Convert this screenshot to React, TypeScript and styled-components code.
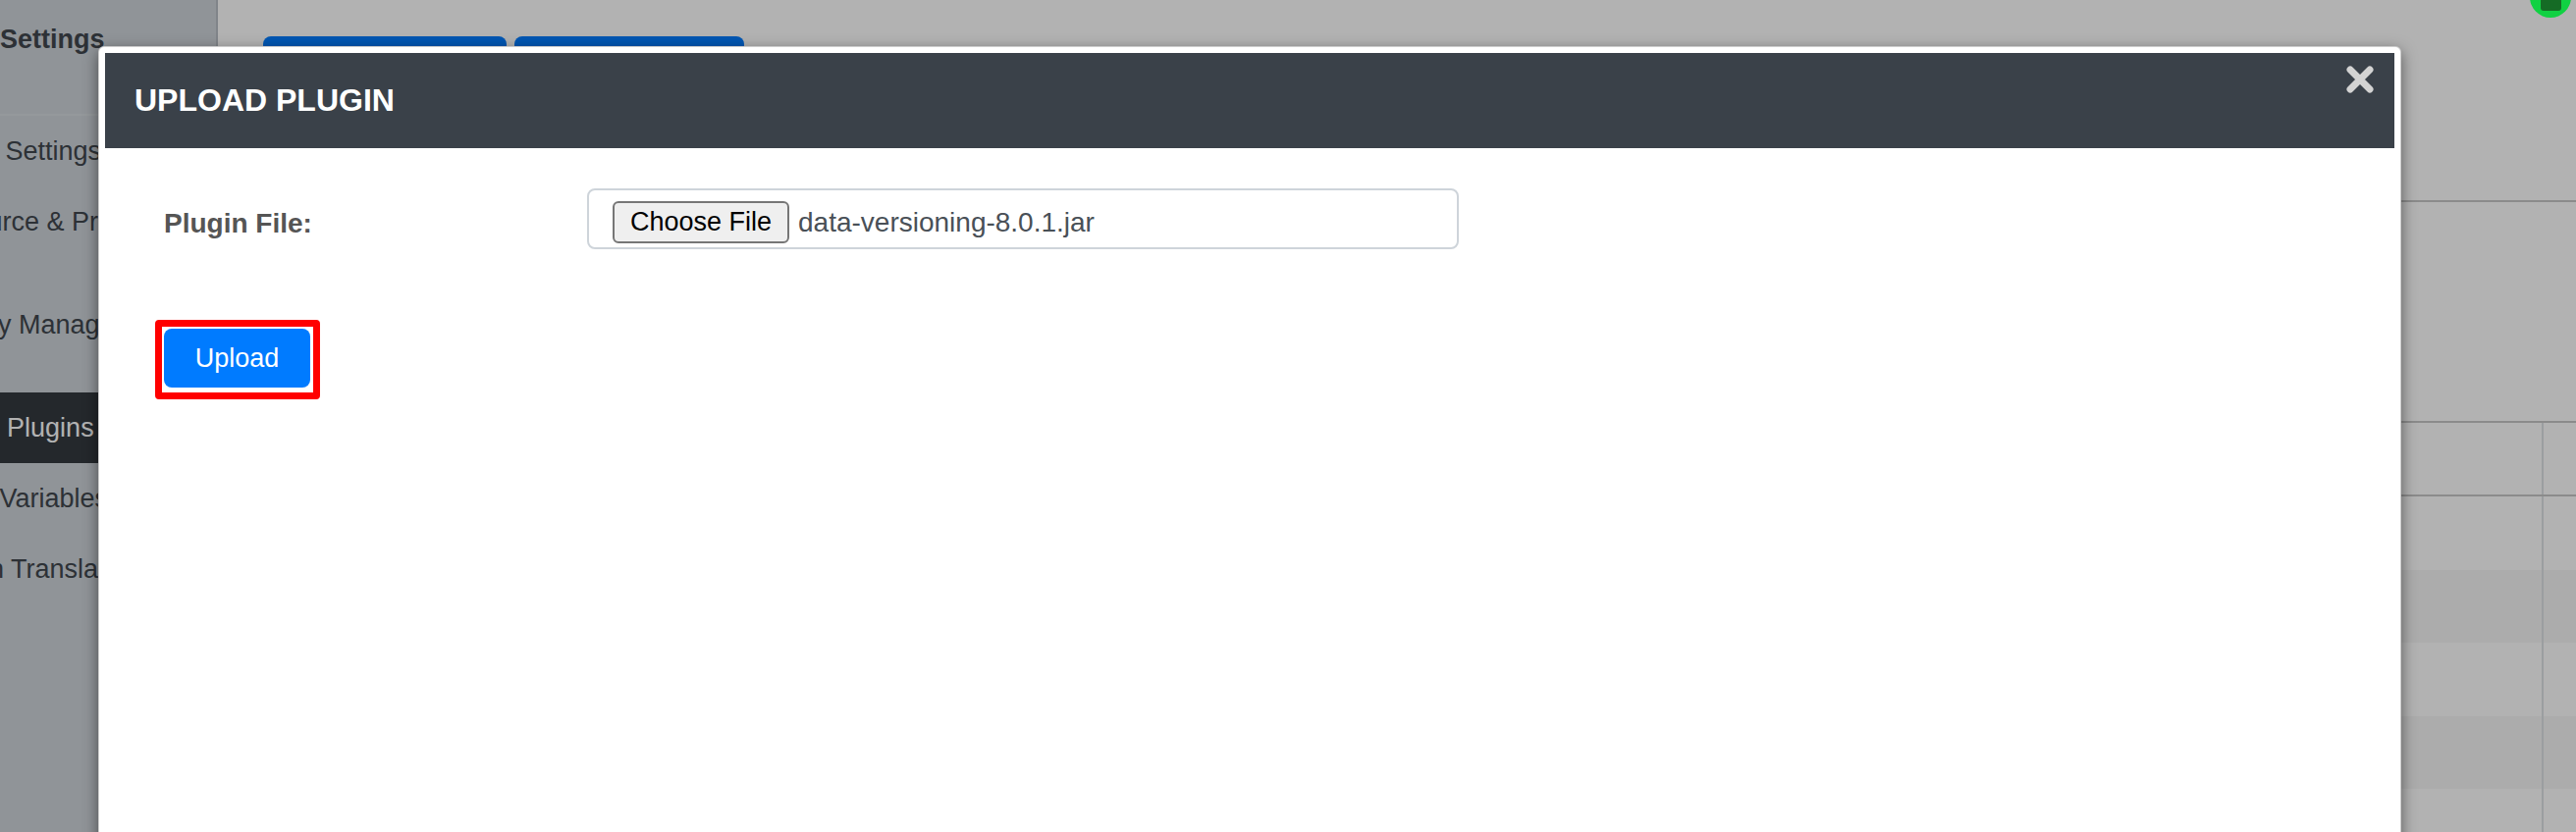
import styled, { createGlobalStyle } from "styled-components"

const GlobalStyle = createGlobalStyle`
    *, *::before, *::after { box-sizing: border-box; }
    html, body { margin: 0; padding: 0; background: #fff; }
    body { font-family: "Liberation Sans", Arial, Helvetica, sans-serif; }
`

const Screen = styled.div`
    position: relative;
    width: 2624px;
    height: 848px;
    overflow: hidden;
    display: flex;
    font-family: "Liberation Sans", Arial, Helvetica, sans-serif;
`

// page behind the modal
const Sidebar = styled.nav`
    flex: none;
    width: 320px;
    margin-left: -98px;
    background: #ced4da;
    border-right: 2px solid #b8bec4;
    color: #41474e;
    font-size: 27px;
    overflow: hidden;
`

const SidebarTitle = styled.div`
    height: 118px;
    padding: 25px 0 0 98px;
    font-weight: bold;
    border-bottom: 2px solid #d6dbe0;
`

const NavItem = styled.div<{ $active?: boolean; $tall?: boolean }>`
    height: ${({ $tall }) => ($tall ? "138px" : "72px")};
    display: flex;
    align-items: center;
    white-space: nowrap;
    background: ${({ $active }) => ($active ? "#343a40" : "transparent")};
    color: ${({ $active }) => ($active ? "#fff" : "inherit")};
`

const Main = styled.main`
    flex: 1;
    display: flex;
    flex-direction: column;
    background: #fff;
`

const TopBar = styled.div`
    flex: none;
    height: 206px;
    padding: 37px 0 0 46px;
    display: flex;
    gap: 8px;
    border-bottom: 2px solid #c8c8c8;
`

const ActionButton = styled.button<{ $width: number }>`
    width: ${({ $width }) => $width}px;
    height: 60px;
    border: none;
    border-radius: 8px;
    background: #007bff;
    color: #fff;
    font: 27px "Liberation Sans", Arial, sans-serif;
`

const FilterArea = styled.div`
    flex: none;
    height: 223px;
`

const TableRow = styled.div<{ $head?: boolean; $striped?: boolean }>`
    flex: none;
    display: grid;
    grid-template-columns: 1fr 35px;
    height: ${({ $head }) => ($head ? "77px" : "74.5px")};
    background: ${({ $striped }) => ($striped ? "#f7f7f7" : "#fff")};
    border-top: ${({ $head }) => ($head ? "2px solid #c8c8c8" : "none")};
    border-bottom: ${({ $head }) => ($head ? "2px solid #c8c8c8" : "none")};
`

const TableCell = styled.div`
    & + & {
        border-left: 2px solid #dee2e6;
    }
`

const Backdrop = styled.div`
    position: absolute;
    inset: 0;
    background: rgba(0, 0, 0, 0.3);
`

const ChatBubble = styled.div`
    position: absolute;
    top: -24px;
    right: 5px;
    width: 42px;
    height: 42px;
    border-radius: 50%;
    background: #10d142;
    display: flex;
    align-items: center;
    justify-content: center;
    &::after {
        content: "";
        width: 21px;
        height: 22px;
        margin-top: 6px;
        border-radius: 3px;
        background: #156b25;
    }
`

// modal
const Modal = styled.div`
    position: absolute;
    left: 100px;
    top: 47px;
    width: 2346px;
    height: 900px;
    padding: 6px;
    background: #fff;
    border: 1px solid rgba(0, 0, 0, 0.2);
    border-radius: 6px;
    box-shadow: 0 5px 15px rgba(0, 0, 0, 0.5);
`

const ModalHeader = styled.div`
    height: 97px;
    padding: 0 21px 0 30px;
    display: flex;
    align-items: center;
    justify-content: space-between;
    background: #3a4149;
`

const ModalTitle = styled.h1`
    margin: 0;
    font-size: 32px;
    font-weight: bold;
    color: #fff;
`

const CloseButton = styled.button`
    align-self: flex-start;
    margin-top: 13px;
    padding: 0;
    width: 28px;
    height: 28px;
    border: none;
    background: none;
    display: flex;
`

const ModalBody = styled.div`
    padding: 41px 0 0 60px;
`

const FormRow = styled.div`
    display: grid;
    grid-template-columns: 431px 888px;
    align-items: center;
`

const FieldLabel = styled.label`
    padding-top: 9px;
    font-size: 28px;
    font-weight: bold;
    color: #555;
`

const FileField = styled.div`
    height: 62px;
    padding: 7px 24px 0;
    display: flex;
    align-items: center;
    gap: 9px;
    border: 2px solid #ced4da;
    border-radius: 8px;
    background: #fff;
`

const ChooseButton = styled.span`
    width: 180px;
    height: 43px;
    display: flex;
    align-items: center;
    justify-content: center;
    border: 2px solid #767676;
    border-radius: 6px;
    background: #efefef;
    color: #000;
    font-size: 27px;
`

const FileName = styled.span`
    font-size: 28px;
    color: #495057;
`

const Highlight = styled.div`
    width: fit-content;
    margin: 72px 0 0 -9px;
    padding: 2px 3px 5px 2px;
    border: 7px solid #ff0000;
    border-radius: 4px;
`

const UploadButton = styled.button`
    width: 149px;
    height: 60px;
    border: none;
    border-radius: 8px;
    background: #007bff;
    color: #fff;
    font: 27px "Liberation Sans", Arial, sans-serif;
`

const navItems = [
    { label: "General Settings" },
    { label: "Datasource & Properties" },
    { label: "Category Management", tall: true },
    { label: "Manage Plugins", active: true },
    { label: "System Variables" },
    { label: "Location Translations" },
]

const CloseIcon = () => (
    <svg width="28" height="28" viewBox="0 0 28 28">
        <path d="M4 4 L24 24 M24 4 L4 24" stroke="#d3d3d3" strokeWidth="7" strokeLinecap="round" />
    </svg>
)

export default function App() {
    return <>
        <GlobalStyle />
        <Screen>
            <Sidebar>
                <SidebarTitle>Settings</SidebarTitle>
                {navItems.map(({ label, active, tall }) =>
                    <NavItem key={label} $active={active} $tall={tall}>{label}</NavItem>)}
            </Sidebar>
            <Main>
                <TopBar>
                    <ActionButton $width={248}>Upload Plugin</ActionButton>
                    <ActionButton $width={234}>Reload All</ActionButton>
                </TopBar>
                <FilterArea />
                <TableRow $head><TableCell /><TableCell /></TableRow>
                {[false, true, false, true, false].map((striped, i) =>
                    <TableRow key={i} $striped={striped}><TableCell /><TableCell /></TableRow>)}
            </Main>
            <Backdrop />
            <ChatBubble />
            <Modal>
                <ModalHeader>
                    <ModalTitle>UPLOAD PLUGIN</ModalTitle>
                    <CloseButton aria-label="Close"><CloseIcon /></CloseButton>
                </ModalHeader>
                <ModalBody>
                    <FormRow>
                        <FieldLabel>Plugin File:</FieldLabel>
                        <FileField>
                            <ChooseButton>Choose File</ChooseButton>
                            <FileName>data-versioning-8.0.1.jar</FileName>
                        </FileField>
                    </FormRow>
                    <Highlight>
                        <UploadButton>Upload</UploadButton>
                    </Highlight>
                </ModalBody>
            </Modal>
        </Screen>
    </>
}
